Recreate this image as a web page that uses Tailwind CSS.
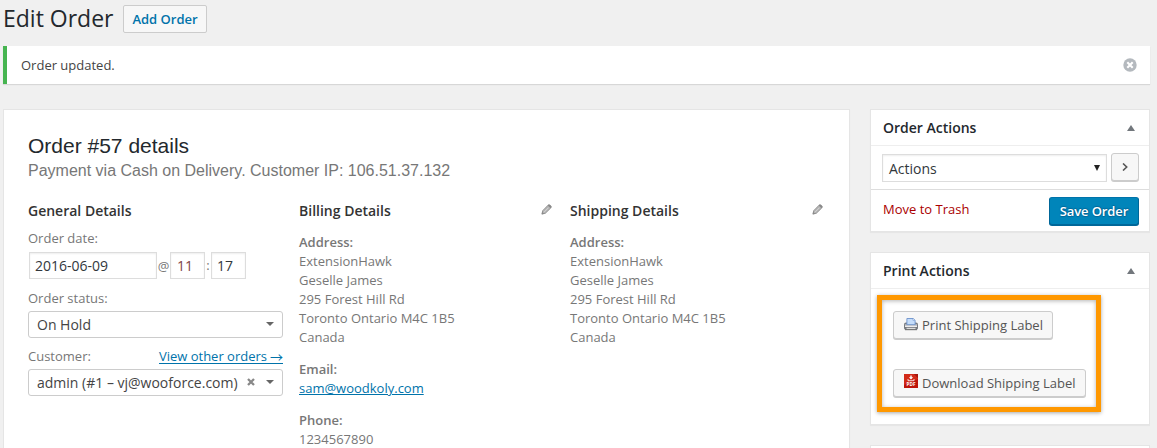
<!DOCTYPE html>
<html lang="en">
<head>
<meta charset="utf-8">
<title>Edit Order</title>
<script src="https://cdn.jsdelivr.net/npm/@tailwindcss/browser@4"></script>
</head>
<body class="h-[448px] overflow-hidden bg-[#f0f0f0] pl-[3px] pr-[7px] font-['Open_Sans',sans-serif] text-[13px] leading-[19px] text-[#444]">
<svg class="hidden">
  <symbol id="pencil" viewBox="0 0 11 11"><path d="M1 10l.7-3.300L7.100 1.200q.8-.7 1.600 0l1.100 1.100q.7.800 0 1.600L4.300 9.300z" fill="#b4b4b4" stroke="#8d8d8d" stroke-width=".9"/><path d="M6.700 1.500l2.800 2.800 1-1.200q.2-.6-.3-1.100L9 .8q-.6-.5-1.200-.2zM.6 10.400l.6-2.600 2 2z" fill="#8a8a8a"/><path d="M3 8.200L7.500 3.700" stroke="#e4e4e4" stroke-width=".7"/></symbol>
</svg>
<header class="flex h-[46px] items-start">
  <h1 class="w-[120px] pt-[4px] text-[23px] leading-[29px] text-[#23282d] whitespace-nowrap">Edit Order</h1>
  <button class="mt-[5px] h-[28px] w-[84px] rounded-[2px] border border-[#ccc] bg-[#f7f7f7] text-[13px] leading-[26px] font-semibold text-[#0073aa]">Add Order</button>
</header>
<div class="flex h-[38px] items-center justify-between border-l-4 border-[#46b450] bg-white pl-[14px] pr-[13px] shadow-[0_1px_1px_rgba(0,0,0,0.1)]">
  <p>Order updated.</p>
  <svg class="h-[14px] w-[14px]" viewBox="0 0 14 14"><circle cx="7" cy="7" r="6.700" fill="#b4b9be"/><path d="M4.300 4.300l5.400 5.400M9.700 4.300l-5.400 5.400" stroke="#fff" stroke-width="2.100"/></svg>
</div>
<div class="mt-[25px] flex h-[339px] items-start gap-[20px] overflow-hidden">
  <main class="h-[339px] w-[847px] border border-b-0 border-[#e5e5e5] bg-white pt-[23px] pl-[24px] shadow-[0_1px_1px_rgba(0,0,0,0.04)]">
    <h2 class="font-['Liberation_Sans',sans-serif] text-[21px] leading-[26px] text-[#23282d]">Order #57 details</h2>
    <p class="mt-px font-['Liberation_Sans',sans-serif] text-[16px] leading-[22px] text-[#777]">Payment via Cash on Delivery. Customer IP: 106.51.37.132</p>
    <div class="mt-[19px] grid grid-cols-[255px_255px_255px] gap-x-[16px] text-[#777]">
      <section>
        <h4 class="text-[14px] leading-[20px] font-semibold text-[#333]">General Details</h4>
        <p class="mt-[8px]">Order date:</p>
        <div class="mt-[4px] flex h-[27px] items-center pl-px text-[14px] text-[#32373c]">
          <div class="h-[27px] w-[128px] border border-[#ddd] pl-[5px] leading-[26px] shadow-[inset_0_1px_2px_rgba(0,0,0,0.07)]">2016-06-09</div>
          <span class="w-[13px] pt-px text-center text-[13px] text-[#777]">@</span>
          <div class="h-[27px] w-[35px] border border-[#ddd] pl-[6px] leading-[26px] text-[#814445] shadow-[inset_0_1px_2px_rgba(0,0,0,0.07)]">11</div>
          <span class="w-[6px] text-center text-[13px] text-[#777]">:</span>
          <div class="h-[27px] w-[35px] border border-[#ddd] pl-[5px] leading-[26px] shadow-[inset_0_1px_2px_rgba(0,0,0,0.07)]">17</div>
        </div>
        <p class="mt-[10px]">Order status:</p>
        <div class="mt-[3px] flex h-[27px] items-center justify-between rounded-[3px] border border-[#ccc] pl-[8px] pr-[8px] text-[14px] text-[#444]">
          <span>On Hold</span>
          <svg class="mb-[2px] h-[4px] w-[8px]" viewBox="0 0 8 4"><path d="M0 0h8L4 4z" fill="#666"/></svg>
        </div>
        <div class="mt-[9px] flex h-[19px] justify-between"><span>Customer:</span><a class="flex h-[17px] items-center border-b border-[#0073aa] text-[#0073aa]"><span class="pt-[2px]">View other orders</span><span class="ml-[3px] w-[13px] pt-[3px] font-['Noto_Sans_CJK_JP',sans-serif] text-[13px] leading-[17px]">→</span></a></div>
        <div class="mt-[3px] flex h-[27px] items-center rounded-[3px] border border-[#ccc] pl-[8px] pr-[8px] text-[14px] text-[#444]">
          <span class="grow whitespace-nowrap">admin (#1 – vj@wooforce.com)</span>
          <svg class="mr-[11px] mb-[2px] h-[8px] w-[8px]" viewBox="0 0 8 8"><path d="M1 1l6 6M7 1l-6 6" stroke="#888" stroke-width="2.300"/></svg>
          <svg class="mb-[2px] h-[4px] w-[8px]" viewBox="0 0 8 4"><path d="M0 0h8L4 4z" fill="#666"/></svg>
        </div>
      </section>
      <section>
        <div class="flex justify-between"><h4 class="text-[14px] leading-[20px] font-semibold text-[#333]">Billing Details</h4><svg class="mt-[3px] mr-[2px] h-[11px] w-[11px]"><use href="#pencil"/></svg></div>
        <p class="mt-[12px]"><b class="font-semibold">Address:</b><br>ExtensionHawk<br>Geselle James<br>295 Forest Hill Rd<br>Toronto Ontario M4C 1B5<br>Canada</p>
        <p class="mt-[13px]"><b class="font-semibold">Email:</b><br><a class="text-[#0073aa] underline">sam@woodkoly.com</a></p>
        <p class="mt-[13px]"><b class="font-semibold">Phone:</b><br>1234567890</p>
      </section>
      <section>
        <div class="flex justify-between"><h4 class="text-[14px] leading-[20px] font-semibold text-[#333]">Shipping Details</h4><svg class="mt-[3px] mr-[2px] h-[11px] w-[11px]"><use href="#pencil"/></svg></div>
        <p class="mt-[12px]"><b class="font-semibold">Address:</b><br>ExtensionHawk<br>Geselle James<br>295 Forest Hill Rd<br>Toronto Ontario M4C 1B5<br>Canada</p>
      </section>
    </div>
  </main>
  <aside class="flex w-[280px] flex-col gap-[20px]">
    <section class="h-[123px] border border-[#e5e5e5] bg-white shadow-[0_1px_1px_rgba(0,0,0,0.04)]">
      <div class="flex h-[36px] items-center justify-between border-b border-[#eee] pl-[12px] pr-[14px]"><h3 class="text-[14px] font-semibold text-[#23282d]">Order Actions</h3><svg class="h-[6px] w-[8px]" viewBox="0 0 8 6"><path d="M4 0l4 6H0z" fill="#72777c"/></svg></div>
      <div class="flex h-[44px] items-start gap-[4px] border-b border-[#ddd] pt-[7px] pl-[11px]">
        <div class="mt-px flex h-[28px] w-[225px] items-center justify-between border border-[#ddd] pl-[6px] pr-[6px] text-[14px] text-[#32373c] shadow-[inset_0_1px_2px_rgba(0,0,0,0.07)]"><span>Actions</span><svg class="mb-px h-[6px] w-[6px]" viewBox="0 0 6 6"><path d="M0 0h6L3 6z" fill="#222"/></svg></div>
        <button class="flex h-[28px] w-[28px] items-center justify-center rounded-[3px] border border-[#ccc] bg-[#f7f7f7] shadow-[0_1px_0_#ccc]"><svg class="h-[8px] w-[6px]" viewBox="0 0 6 8"><path d="M1 .5L4.700 4 1 7.500" fill="none" stroke="#555" stroke-width="1.600"/></svg></button>
      </div>
      <div class="flex justify-between pt-[7px] pl-[12px] pr-[10px]">
        <a class="mt-[3px] text-[#a00]">Move to Trash</a>
        <button class="h-[28px] w-[90px] rounded-[3px] border border-[#006799] border-t-[#0073aa] bg-[#0085ba] text-[13px] leading-[26px] font-semibold tracking-[-0.1px] text-white shadow-[0_1px_0_#006799] [text-shadow:0_-1px_1px_#006799,1px_0_1px_#006799,0_1px_1px_#006799]">Save Order</button>
      </div>
    </section>
    <section class="h-[173px] border border-[#e5e5e5] bg-white shadow-[0_1px_1px_rgba(0,0,0,0.04)]">
      <div class="flex h-[36px] items-center justify-between border-b border-[#eee] pl-[12px] pr-[14px]"><h3 class="text-[14px] font-semibold text-[#23282d]">Print Actions</h3><svg class="h-[6px] w-[8px]" viewBox="0 0 8 6"><path d="M4 0l4 6H0z" fill="#72777c"/></svg></div>
      <div class="mt-[6px] ml-[6px] flex h-[117px] w-[224px] flex-col items-start gap-[30px] border-[5px] border-[#ff9800] pt-[11px] pl-[11px] shadow-[0_1px_4px_rgba(0,0,0,0.35),inset_0_1px_4px_rgba(0,0,0,0.3)]">
        <button class="flex h-[28px] w-[160px] items-center gap-[4px] rounded-[3px] border border-[#ccc] bg-[#f7f7f7] pl-[10px] whitespace-nowrap text-[#555] shadow-[0_1px_0_#ccc]">
          <svg class="mb-[3px] h-[14px] w-[14px] shrink-0" viewBox="0 0 14 14"><path d="M0 7.500Q0 5.500 2 5.500h10q2 0 2 2V11q0 1.500-1.500 1.500h-11Q0 12.500 0 11z" fill="#777b80"/><path d="M1 7.200h12v1.600H1z" fill="#b9bcc0"/><path d="M2.900 7.700V1.500h6.300l1.900 1.700v4.500z" fill="#c5ddfa" stroke="#6c92cc" stroke-width=".9"/><path d="M9 1.500v1.900h2" fill="#fff" stroke="#6c92cc" stroke-width=".6"/><path d="M1 9.300h12" stroke="#f4f4f4" stroke-width="1.300"/><path d="M2.500 10.800h9v1.500h-9z" fill="#dcdcdc"/><path d="M1 12.700h12" stroke="#4c4c4c" stroke-width=".8"/></svg>
          Print Shipping Label</button>
        <button class="flex h-[28px] w-[193px] items-center gap-[4px] rounded-[3px] border border-[#ccc] bg-[#f7f7f7] pl-[10px] whitespace-nowrap text-[#555] shadow-[0_1px_0_#ccc]">
          <svg class="mb-[4px] h-[14px] w-[14px] shrink-0" viewBox="0 0 14 14"><path d="M0 0h14v14H0z" fill="#bd140a"/><path d="M0 0h10L14 4v1L0 11z" fill="#d22a18"/><path d="M10 0h4v4z" fill="#a5170d"/><path d="M6.300 1.600h1.400v1.700h1.500L7 5.600 4.800 3.300h1.500z" fill="#fff"/><path d="M4 5v1.700h6V5" fill="none" stroke="#fff" stroke-width=".8"/><text x="7" y="12.100" text-anchor="middle" font-family="Open Sans" font-size="4.600" font-weight="700" fill="#fff">PDF</text></svg>
          Download Shipping Label</button>
      </div>
    </section>
    <section class="h-[3px] border border-b-0 border-[#e5e5e5] bg-white"></section>
  </aside>
</div>
</body>
</html>
